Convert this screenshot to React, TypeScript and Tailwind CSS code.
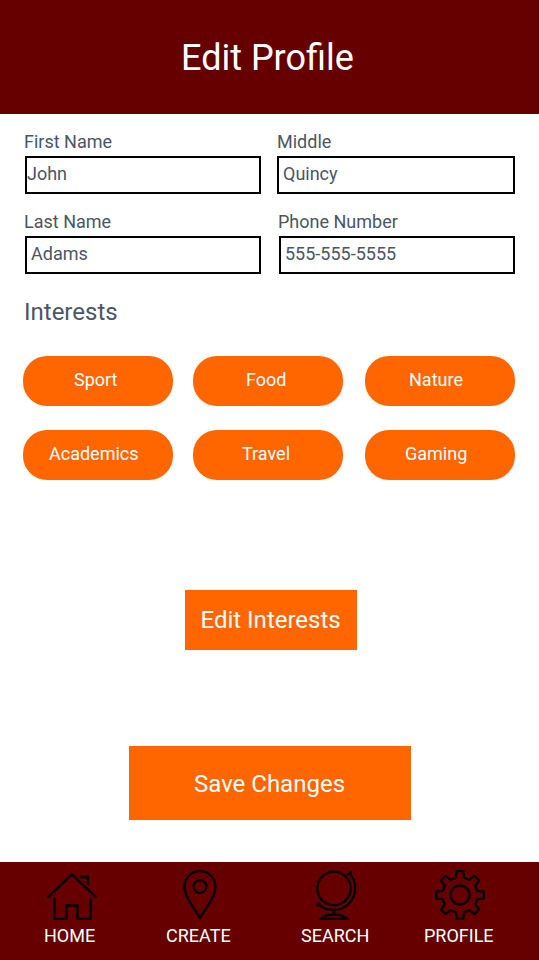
import React from "react";

type FieldProps = {
  label: string;
  value: string;
  labelClass: string;
  boxClass: string;
};

function Field({ label, value, labelClass, boxClass }: FieldProps) {
  return (
    <label className="block h-[62px]">
      <span className={`block h-6 leading-5 ${labelClass}`}>{label}</span>
      <span className={`block h-[38px] border-2 border-black pt-[6px] leading-5 ${boxClass}`}>
        {value}
      </span>
    </label>
  );
}

function Pill({ label, className }: { label: string; className: string }) {
  return (
    <button
      className={`block h-[50px] w-[150px] rounded-[24px] bg-[#ff6600] pb-[3px] text-left text-white ${className}`}
    >
      {label}
    </button>
  );
}

function HomeIcon() {
  return (
    <svg width="50" height="50" viewBox="0 0 50 50" fill="none" stroke="black" strokeWidth="2.3">
      <path d="M.8 27.3 25 4.300l24.200 23M33 7h8v8M7.500 27.500V48.800h12V35.500h11v13.300h13V28.500" />
    </svg>
  );
}

function PinIcon() {
  return (
    <svg width="50" height="50" viewBox="0 0 50 50" fill="none" stroke="black" strokeWidth="2.3">
      <path d="M25 48C20 39 9.500 27.500 9.500 16.700a15.500 15.500 0 0 1 31 0C40.500 27.500 30 39 25 48Z" />
      <circle cx="25" cy="16.500" r="6.400" />
    </svg>
  );
}

function GlobeIcon() {
  return (
    <svg width="50" height="50" viewBox="0 0 50 50" fill="none" stroke="black" strokeWidth="2.3">
      <circle cx="24" cy="18.400" r="16.700" />
      <path d="M39.400 3.300A21.800 21.800 0 0 1 8.800 34.300M37.300 5l4.200-3.700M6.600 36.200l3.700-3.700M24 40v4" />
      <path d="M11 48.800c3-3.300 8-4.300 13-4.300s10 1 13 4.300Z" />
    </svg>
  );
}

const gearPoints = Array.from({ length: 8 }, (_, k) => {
  const a = (k * Math.PI) / 4;
  return [
    [-4.2, -17.3],
    [-3.3, -23.8],
    [3.3, -23.8],
    [4.2, -17.3],
  ].map(([x, y]) => {
    const px = 25 + x * Math.cos(a) - y * Math.sin(a);
    const py = 25 + x * Math.sin(a) + y * Math.cos(a);
    return `${px.toFixed(2)},${py.toFixed(2)}`;
  });
})
  .flat()
  .join(" ");

function GearIcon() {
  return (
    <svg width="50" height="50" viewBox="0 0 50 50" fill="none" stroke="black" strokeWidth="2.3">
      <polygon points={gearPoints} strokeLinejoin="round" />
      <circle cx="25" cy="25" r="9.500" />
    </svg>
  );
}

function NavItem({
  label,
  className,
  labelClass,
  children,
}: {
  label: string;
  className: string;
  labelClass: string;
  children: React.ReactNode;
}) {
  return (
    <a className={`block w-[80px] shrink-0 ${className}`}>
      {children}
      <span className={`mt-[6px] block whitespace-nowrap leading-5 text-white ${labelClass}`}>{label}</span>
    </a>
  );
}

export default function App() {
  return (
    <div className="flex h-[960px] w-[539px] flex-col overflow-hidden bg-white font-['Roboto',sans-serif] text-[18px] text-[#4b5563]">
      <header className="flex h-[114px] shrink-0 items-center bg-[#660000] pl-[181px] pt-[2px]">
        <h1 className="text-4xl text-white">Edit Profile</h1>
      </header>

      <main className="flex-1">
        <div className="flex pt-[18px]">
          <div className="w-[277px] space-y-[18px]">
            <Field label="First Name" value="John" labelClass="pl-6" boxClass="ml-[25px] w-[236px]" />
            <Field label="Last Name" value="Adams" labelClass="pl-6" boxClass="ml-[25px] w-[236px] pl-1" />
          </div>
          <div className="space-y-[18px]">
            <Field label="Middle" value="Quincy" labelClass="" boxClass="w-[238px] pl-1" />
            <Field label="Phone Number" value="555-555-5555" labelClass="pl-px" boxClass="ml-[2px] w-[236px] pl-1" />
          </div>
        </div>

        <h2 className="mt-[22px] pl-6 text-2xl">Interests</h2>

        <div className="mt-7 grid grid-cols-[170px_172px_150px] gap-y-6 pl-[23px]">
          <Pill label="Sport" className="pl-[51px]" />
          <Pill label="Food" className="pl-[53px]" />
          <Pill label="Nature" className="pl-[44px]" />
          <Pill label="Academics" className="pl-[26px]" />
          <Pill label="Travel" className="pl-[49px]" />
          <Pill label="Gaming" className="pl-[40px]" />
        </div>

        <button className="ml-[185px] mt-[110px] block h-[60px] w-[172px] bg-[#ff6600] pl-[15.5px] text-left text-2xl text-white">
          Edit Interests
        </button>
        <button className="ml-[129px] mt-24 block h-[74px] w-[282px] bg-[#ff6600] pl-[65px] pt-[2px] text-left text-2xl text-white">
          Save Changes
        </button>
      </main>

      <nav className="flex h-[98px] shrink-0 bg-[#660000] pt-2">
        <NavItem label="HOME" className="ml-[47px]" labelClass="-ml-[3px]">
          <HomeIcon />
        </NavItem>
        <NavItem label="CREATE" className="ml-[48px]" labelClass="-ml-[9px]">
          <PinIcon />
        </NavItem>
        <NavItem label="SEARCH" className="ml-[55px]" labelClass="-ml-[9px]">
          <GlobeIcon />
        </NavItem>
        <NavItem label="PROFILE" className="ml-[45px]" labelClass="-ml-[11px]">
          <GearIcon />
        </NavItem>
      </nav>
    </div>
  );
}
